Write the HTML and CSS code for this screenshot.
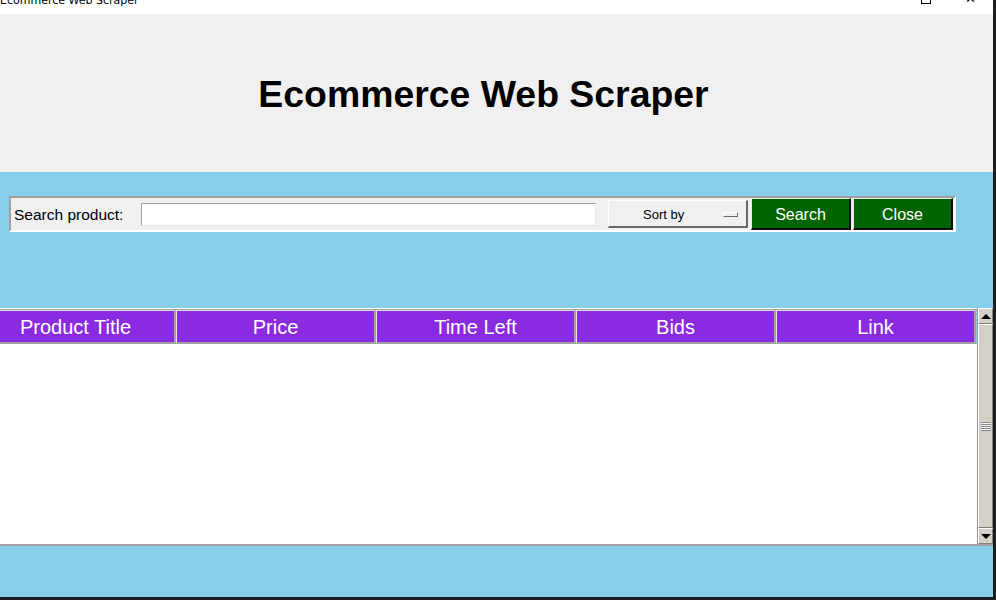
FILE: index.html
```html
<!DOCTYPE html>
<html>
<head>
<meta charset="utf-8">
<link rel="stylesheet" href="styles.css">
</head>
<body>
<div class="window">
  <div class="titlebar">
    <span class="wintitle">Ecommerce Web Scraper</span>
    <div class="controls">
      <span class="ctl max"></span>
      <span class="ctl close">&#x2715;</span>
    </div>
  </div>
  <div class="header">
    <h1 class="apptitle">Ecommerce Web Scraper</h1>
  </div>
  <div class="main">
    <div class="searchframe">
      <span class="label">Search product:</span>
      <div class="entry"></div>
      <div class="sortbtn"><span class="sorttext">Sort by</span><span class="indicator"></span></div>
      <div class="gbtn">Search</div>
      <div class="gbtn">Close</div>
    </div>
    <div class="tablearea">
      <div class="table">
        <div class="thead">
          <div class="th">Product Title</div>
          <div class="th">Price</div>
          <div class="th">Time Left</div>
          <div class="th">Bids</div>
          <div class="th">Link</div>
        </div>
        <div class="tbody"></div>
      </div>
      <div class="scrollbar">
        <div class="sbtn"><span class="arrow up"></span></div>
        <div class="thumb"><span class="grip"></span></div>
        <div class="sbtn"><span class="arrow down"></span></div>
      </div>
    </div>
  </div>
</div>
</body>
</html>
```
FILE: styles.css
```css
* { box-sizing: border-box; }
html, body { margin: 0; padding: 0; }
body {
  width: 996px;
  height: 600px;
  overflow: hidden;
  font-family: "Liberation Sans", Arial, sans-serif;
  background: #1e1e1e;
}
.window {
  width: 993px;
  height: 597px;
  display: flex;
  flex-direction: column;
  background: #87ceeb;
}
.titlebar {
  height: 14px;
  background: #ffffff;
  display: flex;
  justify-content: space-between;
  overflow: hidden;
}
.wintitle {
  font-family: "DejaVu Sans", sans-serif;
  font-size: 11px;
  line-height: 11px;
  margin-top: -5px;
  color: #000;
}
.controls {
  display: flex;
  align-items: flex-start;
  margin-top: -6px;
}
.ctl.max {
  width: 10px;
  height: 10px;
  border: 1px solid #000;
  margin-right: 34px;
  margin-top: 0;
}
.ctl.close {
  font-size: 13px;
  line-height: 13px;
  margin-right: 17px;
  margin-top: -2px;
  color: #000;
}
.header {
  height: 158px;
  background: #f0f0f0;
  display: flex;
  align-items: center;
  justify-content: center;
  padding-right: 26px;
  padding-top: 2px;
}
.apptitle {
  margin: 0;
  font-size: 37.4px;
  font-weight: bold;
  color: #000;
}
.main {
  flex: 1;
  display: flex;
  flex-direction: column;
  padding-top: 24px;
}
.searchframe {
  margin-left: 9px;
  width: 947px;
  height: 36px;
  background: #f0f0f0;
  border-top: 2px solid #a0a0a0;
  border-left: 2px solid #a0a0a0;
  border-bottom: 2px solid #ffffff;
  border-right: 2px solid #ffffff;
  display: flex;
  align-items: center;
}
.label {
  font-size: 15.5px;
  color: #000;
  margin-left: 3px;
  margin-top: 2px;
  width: 127px;
}
.entry {
  width: 455px;
  height: 23px;
  background: #fff;
  border-top: 1px solid #a0a0a0;
  border-left: 1px solid #a0a0a0;
  border-bottom: 1px solid #e3e3e3;
  border-right: 1px solid #e3e3e3;
  margin-top: 1px;
}
.sortbtn {
  margin-left: 12px;
  width: 140px;
  height: 28px;
  background: #f0f0f0;
  border-top: 1px solid #ffffff;
  border-left: 1px solid #ffffff;
  border-bottom: 2px solid #6a6a6a;
  border-right: 2px solid #6a6a6a;
  display: flex;
  align-items: center;
  padding-left: 34px;
}
.sorttext {
  font-size: 13px;
  color: #000;
  width: 80px;
  margin-top: 1px;
}
.indicator {
  width: 15px;
  height: 5px;
  background: #f0f0f0;
  border-top: 1px solid #fff;
  border-left: 1px solid #fff;
  border-bottom: 1px solid #6a6a6a;
  border-right: 1px solid #6a6a6a;
  margin-top: 1px;
}
.gbtn {
  margin-left: 2px;
  width: 100px;
  height: 32px;
  background: #006400;
  color: #fff;
  font-size: 16px;
  display: flex;
  align-items: center;
  justify-content: center;
  padding-top: 3px;
  border-top: 1px solid #e8e8e8;
  border-left: 1px solid #e8e8e8;
  border-bottom: 2px solid #101010;
  border-right: 2px solid #101010;
}
.sortbtn + .gbtn { margin-left: 3px; }
.tablearea {
  margin-top: 76px;
  height: 238px;
  display: flex;
  border-bottom: 2px solid #a0a0a0;
}
.table {
  width: 977px;
  overflow: hidden;
  display: flex;
  flex-direction: column;
  border-top: 1px solid #ffffff;
}
.thead {
  display: flex;
  margin-left: -24px;
  flex-shrink: 0;
  border-top: 1px solid #a0a0a0;
}
.th {
  width: 200px;
  flex-shrink: 0;
  height: 34px;
  background: #8a2be2;
  color: #fff;
  font-size: 20px;
  display: flex;
  align-items: center;
  justify-content: center;
  padding-top: 2px;
  border-top: 1px solid #e6e6e6;
  border-left: 1px solid #e6e6e6;
  border-right: 2px solid #a0a0a0;
  border-bottom: 2px solid #a0a0a0;
}
.tbody {
  flex: 1;
  background: #fff;
}
.scrollbar {
  width: 16px;
  display: flex;
  flex-direction: column;
  background: #d4d0c8;
  border-left: 1px solid #a09c94;
}
.sbtn {
  height: 16px;
  background: #d4d0c8;
  border-top: 1px solid #fff;
  border-left: 1px solid #fff;
  border-bottom: 1px solid #808080;
  border-right: 1px solid #808080;
  display: flex;
  align-items: center;
  justify-content: center;
}
.arrow {
  width: 0;
  height: 0;
  border-left: 5px solid transparent;
  border-right: 5px solid transparent;
}
.arrow.up { border-bottom: 5px solid #000; }
.arrow.down { border-top: 5px solid #000; }
.thumb {
  flex: 1;
  background: #d4d0c8;
  border-top: 1px solid #fff;
  border-left: 1px solid #fff;
  border-bottom: 1px solid #808080;
  border-right: 1px solid #808080;
  display: flex;
  align-items: center;
  justify-content: center;
}
.grip {
  width: 10px;
  height: 9px;
  background: repeating-linear-gradient(to bottom, #8a8a8a 0, #8a8a8a 1px, #f4f4f4 1px, #f4f4f4 2px);
}
```
